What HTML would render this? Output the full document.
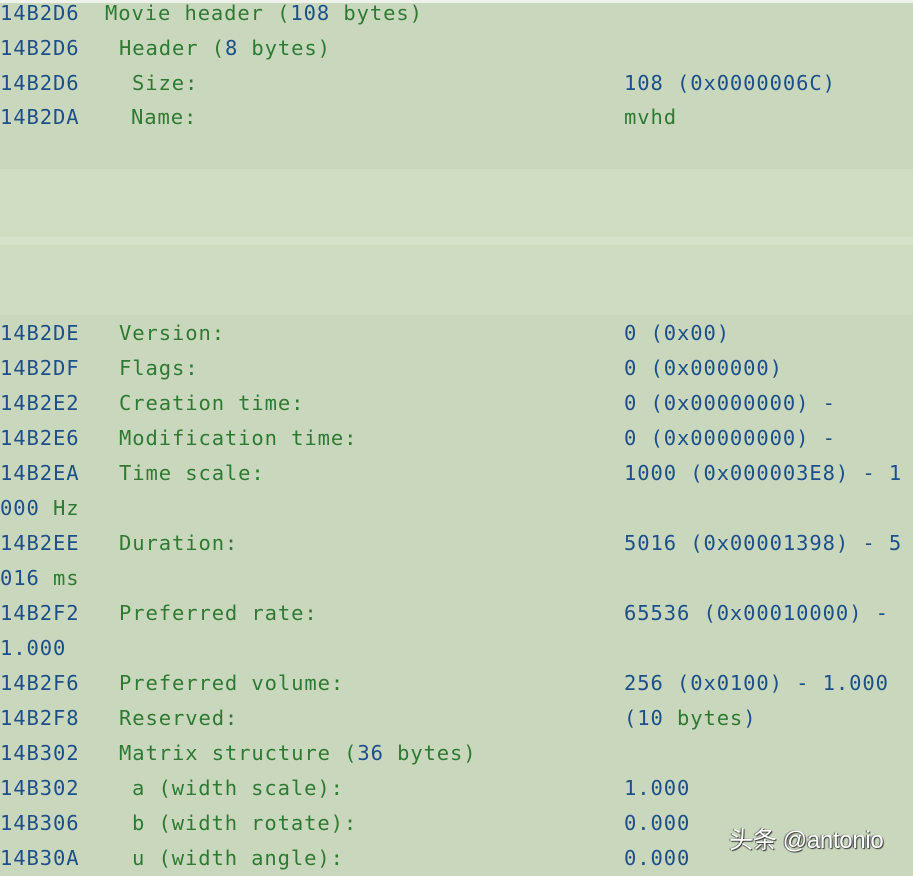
<!DOCTYPE html>
<html><head><meta charset="utf-8"><style>
html,body{margin:0;padding:0}
body{width:913px;height:876px;overflow:hidden;position:relative;background:#c9d8bd;font-family:"DejaVu Sans Mono","Liberation Mono",monospace;font-size:20.5px;letter-spacing:0.9px}
.b{position:absolute;left:0;width:913px}
.r{position:absolute;left:0;height:35px;line-height:35px;white-space:pre;width:913px}
.r span{position:absolute;top:0}
.a{color:#1d4f8a}
.g{color:#2f7a33}
.bl{color:#1d4f8a}
.v{left:624px}
</style></head><body>
<div class="b" style="top:0;height:3px;background:#eef2ea"></div>
<div class="b" style="top:169px;height:68px;background:#cfdec3"></div>
<div class="b" style="top:237px;height:8px;background:#d4e3c9"></div>
<div class="b" style="top:245px;height:70px;background:#cedcc2"></div>

<div class="r" style="top:-4px"><span class="a" style="left:0">14B2D6</span><span class="g" style="left:105px">Movie header (<span class="bl" style="position:static">108</span> bytes)</span></div>
<div class="r" style="top:31px"><span class="a" style="left:0">14B2D6</span><span class="g" style="left:119px">Header (<span class="bl" style="position:static">8</span> bytes)</span></div>
<div class="r" style="top:66px"><span class="a" style="left:0">14B2D6</span><span class="g" style="left:132px">Size:</span><span class="a v">108 (0x0000006C)</span></div>
<div class="r" style="top:100px"><span class="a" style="left:0">14B2DA</span><span class="g" style="left:131px">Name:</span><span class="g v">mvhd</span></div>

<div class="r" style="top:316px"><span class="a" style="left:0">14B2DE</span><span class="g" style="left:119px">Version:</span><span class="a v">0 (0x00)</span></div>
<div class="r" style="top:351px"><span class="a" style="left:0">14B2DF</span><span class="g" style="left:119px">Flags:</span><span class="a v">0 (0x000000)</span></div>
<div class="r" style="top:386px"><span class="a" style="left:0">14B2E2</span><span class="g" style="left:119px">Creation time:</span><span class="a v">0 (0x00000000) -</span></div>
<div class="r" style="top:421px"><span class="a" style="left:0">14B2E6</span><span class="g" style="left:119px">Modification time:</span><span class="a v">0 (0x00000000) -</span></div>
<div class="r" style="top:456px"><span class="a" style="left:0">14B2EA</span><span class="g" style="left:119px">Time scale:</span><span class="a v">1000 (0x000003E8) - 1</span></div>
<div class="r" style="top:491px"><span class="a" style="left:0">000 <span class="g" style="position:static">Hz</span></span></div>
<div class="r" style="top:526px"><span class="a" style="left:0">14B2EE</span><span class="g" style="left:119px">Duration:</span><span class="a v">5016 (0x00001398) - 5</span></div>
<div class="r" style="top:561px"><span class="a" style="left:0">016 <span class="g" style="position:static">ms</span></span></div>
<div class="r" style="top:596px"><span class="a" style="left:0">14B2F2</span><span class="g" style="left:119px">Preferred rate:</span><span class="a v">65536 (0x00010000) -</span></div>
<div class="r" style="top:631px"><span class="a" style="left:0">1.000</span></div>
<div class="r" style="top:666px"><span class="a" style="left:0">14B2F6</span><span class="g" style="left:119px">Preferred volume:</span><span class="a v">256 (0x0100) - 1.000</span></div>
<div class="r" style="top:701px"><span class="a" style="left:0">14B2F8</span><span class="g" style="left:119px">Reserved:</span><span class="a v">(10 <span class="g" style="position:static">bytes</span>)</span></div>
<div class="r" style="top:736px"><span class="a" style="left:0">14B302</span><span class="g" style="left:119px">Matrix structure (<span class="bl" style="position:static">36</span> bytes)</span></div>
<div class="r" style="top:771px"><span class="a" style="left:0">14B302</span><span class="g" style="left:132px">a (width scale):</span><span class="a v">1.000</span></div>
<div class="r" style="top:806px"><span class="a" style="left:0">14B306</span><span class="g" style="left:132px">b (width rotate):</span><span class="a v">0.000</span></div>
<div class="r" style="top:841px"><span class="a" style="left:0">14B30A</span><span class="g" style="left:132px">u (width angle):</span><span class="a v">0.000</span></div>

<div style="position:absolute;left:729px;top:826px;font-family:'Liberation Sans','Noto Sans CJK SC',sans-serif;font-size:24px;letter-spacing:-0.3px;color:#fff;text-shadow:1px 1px 1px #333,-1px 0 1px #555;line-height:30px">头条 @antonio</div>
</body></html>
